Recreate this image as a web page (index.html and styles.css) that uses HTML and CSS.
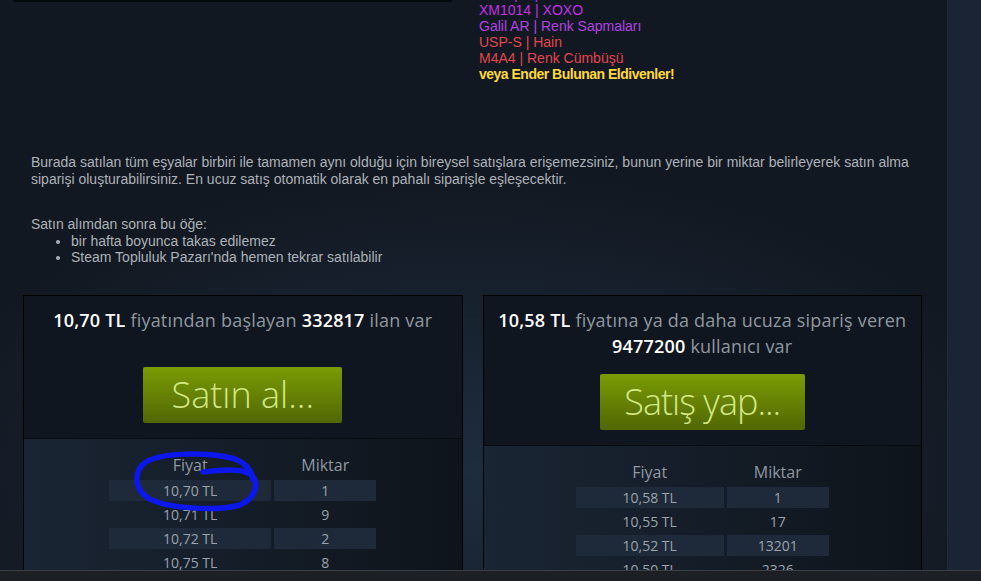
FILE: index.html
```html
<!DOCTYPE html>
<html lang="tr">
<head>
<meta charset="utf-8">
<title>Pazar</title>
<link rel="stylesheet" href="styles.css">
</head>
<body>
<div class="page">
  <div class="main">
    <div class="topline">
      <div class="imgbox"></div>
      <div class="drops">
        <div class="c-pink">AWP | Hiper Canavar</div>
        <div class="c-pink">XM1014 | XOXO</div>
        <div class="c-purple">Galil AR | Renk Sapmaları</div>
        <div class="c-red">USP-S | Hain</div>
        <div class="c-red">M4A4 | Renk Cümbüşü</div>
        <div class="c-gold">veya Ender Bulunan Eldivenler!</div>
      </div>
    </div>

    <div class="content">
      <p class="desc first">Burada satılan tüm eşyalar birbiri ile tamamen aynı olduğu için bireysel satışlara erişemezsiniz, bunun yerine bir miktar belirleyerek satın alma siparişi oluşturabilirsiniz. En ucuz satış otomatik olarak en pahalı siparişle eşleşecektir.</p>
      <p class="desc second">Satın alımdan sonra bu öğe:</p>
      <ul class="desc-list">
        <li>bir hafta boyunca takas edilemez</li>
        <li>Steam Topluluk Pazarı'nda hemen tekrar satılabilir</li>
      </ul>

      <div class="orders">
        <div class="block">
          <div class="block-top">
            <div class="block-head"><b>10,70 TL</b> fiyatından başlayan <b>332817</b> ilan var</div>
            <a class="btn btn-buy">Satın al...</a>
          </div>
          <div class="block-bottom">
            <table class="otable sell">
              <tr><th class="c1">Fiyat</th><th class="c2">Miktar</th></tr>
              <tr class="alt"><td>10,70 TL</td><td>1</td></tr>
              <tr><td>10,71 TL</td><td>9</td></tr>
              <tr class="alt"><td>10,72 TL</td><td>2</td></tr>
              <tr><td>10,75 TL</td><td>8</td></tr>
              <tr class="alt"><td>10,76 TL</td><td>4</td></tr>
            </table>
          </div>
        </div>
        <div class="block">
          <div class="block-top">
            <div class="block-head"><b>10,58 TL</b> fiyatına ya da daha ucuza sipariş veren <b>9477200</b> kullanıcı var</div>
            <a class="btn btn-sell">Satış yap...</a>
          </div>
          <div class="block-bottom">
            <table class="otable buy">
              <tr><th class="c1">Fiyat</th><th class="c2">Miktar</th></tr>
              <tr class="alt"><td>10,58 TL</td><td>1</td></tr>
              <tr><td>10,55 TL</td><td>17</td></tr>
              <tr class="alt"><td>10,52 TL</td><td>13201</td></tr>
              <tr><td>10,50 TL</td><td>2326</td></tr>
              <tr class="alt"><td>10,49 TL</td><td>412</td></tr>
            </table>
          </div>
        </div>
      </div>
    </div>
  </div>
  <div class="side"></div>

  <svg class="annot" width="981" height="581" viewBox="0 0 981 581">
    <path d="M203,472 C220,470 240,468 250,474 C260,482 256,498 240,505 C215,512 165,508 148,498 C133,488 134,470 146,462 C162,452 210,452 235,459 C246,463 251,470 253,479" fill="none" stroke="#0c17ee" stroke-width="5.5" stroke-linecap="round" stroke-linejoin="round"/>
  </svg>
  <div class="bottombar"></div>
</div>
</body>
</html>
```

FILE: styles.css
```css
html, body {
  margin: 0;
  padding: 0;
}
body {
  background: #121821;
  font-family: "Liberation Sans", Arial, sans-serif;
  overflow: hidden;
}
.page {
  position: relative;
  display: flex;
  height: 581px;
  overflow: hidden;
}
.main {
  width: 947px;
  flex: none;
  background:
    radial-gradient(ellipse 560px 300px at 470px 470px, rgba(30, 46, 64, 0.95), rgba(18, 24, 33, 0) 100%),
    #121821;
}
.side {
  flex: 1;
  background: #1a2434;
  border-left: 1px solid #1e2a3a;
}

.topline {
  display: flex;
  align-items: flex-start;
}
.imgbox {
  margin-left: 13px;
  width: 439px;
  height: 2px;
  background: #04090c;
  border-radius: 0 0 3px 3px;
}
.drops {
  margin-left: 27px;
  margin-top: -14px;
  font-size: 14px;
  line-height: 16px;
}
.c-pink { color: #c330e6; }
.c-purple { color: #b044e2; }
.c-red { color: #e2464e; }
.c-gold { color: #ffd83a; font-weight: bold; letter-spacing: -0.5px; }

.content {
  margin-left: 23px;
  width: 899px;
}
.desc {
  margin: 0;
  padding: 0 8px;
  font-size: 14px;
  line-height: 17px;
  color: #acb2b8;
}
.desc.first {
  margin-top: 72px;
  padding-right: 12px;
}
.desc.second {
  margin-top: 28px;
}
.desc-list {
  margin: 0;
  padding-left: 48px;
  font-size: 14px;
  line-height: 16px;
  color: #acb2b8;
}

.orders {
  margin-top: 30px;
  display: flex;
  gap: 20px;
}
.block {
  flex: 1;
  border: 1px solid #000;
  background: #10161e;
}
.block-top {
  padding: 11px 10px 15px;
  text-align: center;
  background: #10161f;
}
.block-head {
  min-height: 45px;
  font-family: "Open Sans", sans-serif;
  font-size: 18px;
  letter-spacing: 0.2px;
  line-height: 26px;
  color: #8f98a0;
}
.block-head b {
  color: #ffffff;
  font-weight: 600;
}
.btn {
  display: inline-block;
  margin-top: 15px;
  height: 56px;
  padding: 0;
  border-radius: 2px;
  background: linear-gradient(to bottom, #799905 5%, #536904 95%);
  color: #d2e885;
  font-family: "Open Sans", sans-serif;
  font-size: 36px;
  font-weight: 300;
  line-height: 56px;
  text-align: center;
  cursor: pointer;
}
.btn-buy {
  width: 199px;
}
.btn-sell {
  width: 205px;
  letter-spacing: -1px;
}
.block-bottom {
  border-top: 1px solid #080b10;
  background: linear-gradient(to right, #1a2534, #0e141b);
  padding-top: 11px;
  height: 200px;
}
.otable {
  margin: 0 auto;
  border-spacing: 3px;
  font-family: "Open Sans", sans-serif;
  text-align: center;
}
.otable th {
  font-size: 16px;
  font-weight: 400;
  line-height: 24px;
  color: #8f98a0;
  padding: 0;
}
.otable td {
  font-size: 14px;
  line-height: 21px;
  height: 21px;
  color: #9aa3ab;
  padding: 0;
}
.otable tr.alt td {
  background: #1e2a39;
}
.sell .c1 { width: 162px; }
.buy .c1 { width: 148px; }
.otable .c2 { width: 102px; }

.annot {
  position: absolute;
  left: 0;
  top: 0;
  pointer-events: none;
}
.bottombar {
  position: absolute;
  left: 0;
  right: 0;
  bottom: 0;
  height: 10px;
  background: #1c1f24;
  border-top: 1px solid #3a3f45;
}
```
